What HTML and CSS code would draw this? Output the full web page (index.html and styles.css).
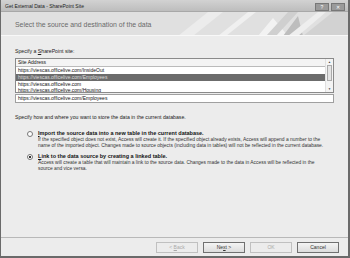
FILE: index.html
```html
<!DOCTYPE html>
<html lang="en">
<head>
<meta charset="UTF-8">
<title>Get External Data - SharePoint Site</title>
<link rel="stylesheet" href="styles.css">
</head>
<body>
<div class="window">
    <div class="titlebar">
        <span class="title">Get External Data - SharePoint Site</span>
        <span class="ctl">?</span>
        <span class="ctl">&#x2715;</span>
    </div>
    <div class="banner">
        <span class="heading">Select the source and destination of the data</span>
        <svg class="deco" width="175" height="24" viewBox="25 0 175 24">
            <polygon points="30,24 60,0 75,0 45,24" fill="#ececec"/>
            <polygon points="70,24 100,0 108,0 78,24" fill="#f0f0f0"/>
            <polygon points="110,24 125,6 140,24" fill="#f2f2f2"/>
            <polygon points="118,24 140,0 150,0 128,24" fill="#cfcfcf"/>
            <polygon points="135,24 150,4 155,24" fill="#bdbdbd"/>
            <polygon points="155,24 185,0 200,0 200,24" fill="#d2d2d2"/>
            <polygon points="140,24 170,0 178,0 150,24" fill="#eeeeee"/>
        </svg>
    </div>
    <div class="content">
        <div class="label">Specify a <u>S</u>harePoint site:</div>
        <div class="listbox">
            <div class="rows">
                <div class="row head">Site Address</div>
                <div class="row">https://viescas.officelive.com/InsideOut</div>
                <div class="row selected">https://viescas.officelive.com/Employees</div>
                <div class="row">https://viescas.officelive.com</div>
                <div class="row cut">https://viescas.officelive.com/Housing</div>
            </div>
            <div class="scroll">
                <span class="arrow">&#9650;</span>
                <span class="thumb"></span>
                <span class="arrow">&#9660;</span>
            </div>
        </div>
        <div class="field">https://viescas.officelive.com/Employees</div>

        <div class="label how">Specify how and where you want to store the data in the current database.</div>

        <div class="option">
            <span class="radio"></span>
            <div>
                <div class="opt-title"><u>I</u>mport the source data into a new table in the current database.</div>
                <div class="opt-text">If the specified object does not exist, Access will create it. If the specified object already exists, Access will append a number to the name of the imported object. Changes made to source objects (including data in tables) will not be reflected in the current database.</div>
            </div>
        </div>
        <div class="option">
            <span class="radio on"></span>
            <div>
                <div class="opt-title"><u>L</u>ink to the data source by creating a linked table.</div>
                <div class="opt-text">Access will create a table that will maintain a link to the source data. Changes made to the data in Access will be reflected in the source and vice versa.</div>
            </div>
        </div>
    </div>
    <div class="footer">
        <span class="btn off">&lt; <u>B</u>ack</span>
        <span class="btn">Ne<u>x</u>t &gt;</span>
        <span class="btn off">OK</span>
        <span class="btn">Cancel</span>
    </div>
</div>
</body>
</html>
```

FILE: styles.css
```css
body {
    margin: 0;
    font-family: "Liberation Sans", Arial, sans-serif;
    background-color: #fff;
}
.window {
    width: 350px;
    height: 258px;
    box-sizing: border-box;
    border-left: 1px solid #6a6a6a;
    border-right: 2px solid #6a6a6a;
    border-bottom: 2px solid #6a6a6a;
    background-color: #ececec;
    display: flex;
    flex-direction: column;
}
.titlebar {
    height: 11px;
    display: flex;
    align-items: center;
    gap: 2px;
    padding: 0 3px 0 4px;
    background: linear-gradient(#d2d2d2, #bdbdbd);
    border-bottom: 1px solid #a8a8a8;
}
.title {
    flex: 1;
    font-size: 5px;
    color: #222;
}
.ctl {
    width: 12px;
    height: 6px;
    margin-top: 3px;
    border: 1px solid #777;
    background-color: #9a9a9a;
    color: #fff;
    font-size: 5px;
    line-height: 6px;
    text-align: center;
}
.banner {
    height: 23px;
    display: flex;
    align-items: center;
    justify-content: space-between;
    background-color: #e0e0e0;
    border-bottom: 1px solid #f8f8f8;
    overflow: hidden;
}
.heading {
    padding-left: 14px;
    padding-top: 2px;
    font-size: 6.9px;
    color: #6a6a6a;
    white-space: nowrap;
}
.deco {
    display: block;
    flex: none;
}
.content {
    flex: 1;
    padding: 11px 14px 0 14px;
}
.label {
    font-size: 5.2px;
    color: #222;
    height: 8px;
    line-height: 8px;
}
.listbox {
    display: flex;
    height: 33px;
    margin-top: 3px;
    border: 1px solid #8a8a8a;
    background-color: #fff;
}
.rows {
    flex: 1;
    overflow: hidden;
}
.row {
    height: 7px;
    line-height: 7px;
    padding-left: 2px;
    font-size: 5px;
    color: #111;
}
.row.head {
    background-color: #f4f4f4;
    border-bottom: 1px solid #bbb;
}
.row.selected {
    background-color: #6c6c6c;
    color: #ddd;
}
.row.cut {
    line-height: 5px;
}
.scroll {
    width: 7px;
    display: flex;
    flex-direction: column;
    align-items: center;
    background-color: #f4f4f4;
    border-left: 1px solid #e0e0e0;
}
.arrow {
    font-size: 3px;
    line-height: 6px;
    color: #444;
}
.thumb {
    width: 5px;
    height: 16px;
    border: 1px solid #aaa;
    box-sizing: border-box;
    background-color: #e4e4e4;
    flex: none;
}
.scroll .arrow:last-child {
    margin-top: auto;
}
.field {
    height: 7px;
    line-height: 7px;
    margin-top: 1px;
    padding-left: 2px;
    border: 1px solid #a0a0a0;
    background-color: #fff;
    font-size: 5px;
    color: #111;
}
.label.how {
    margin-top: 10px;
}
.option {
    display: flex;
    gap: 5px;
    padding-left: 12px;
    margin-top: 9px;
}
.option + .option {
    margin-top: 4px;
}
.radio {
    width: 4px;
    height: 4px;
    margin-top: 1px;
    border: 1px solid #777;
    border-radius: 50%;
    background-color: #fff;
    flex: none;
}
.radio.on {
    background: radial-gradient(#333 45%, #fff 55%);
}
.opt-title {
    font-size: 5.5px;
    font-weight: bold;
    color: #111;
    height: 7px;
    line-height: 7px;
}
.opt-text {
    font-size: 4.9px;
    line-height: 6px;
    color: #333;
    padding-right: 6px;
}
.footer {
    height: 18px;
    display: flex;
    align-items: center;
    justify-content: flex-end;
    gap: 5px;
    padding-right: 9px;
    border-top: 1px solid #b8b8b8;
}
.btn {
    width: 40px;
    height: 9px;
    line-height: 9px;
    text-align: center;
    font-size: 5px;
    color: #333;
    border: 1px solid #707070;
    background: linear-gradient(#f4f4f4, #dcdcdc);
}
.btn.off {
    color: #aaa;
    border-color: #c0c0c0;
    background: #ececec;
}
```
